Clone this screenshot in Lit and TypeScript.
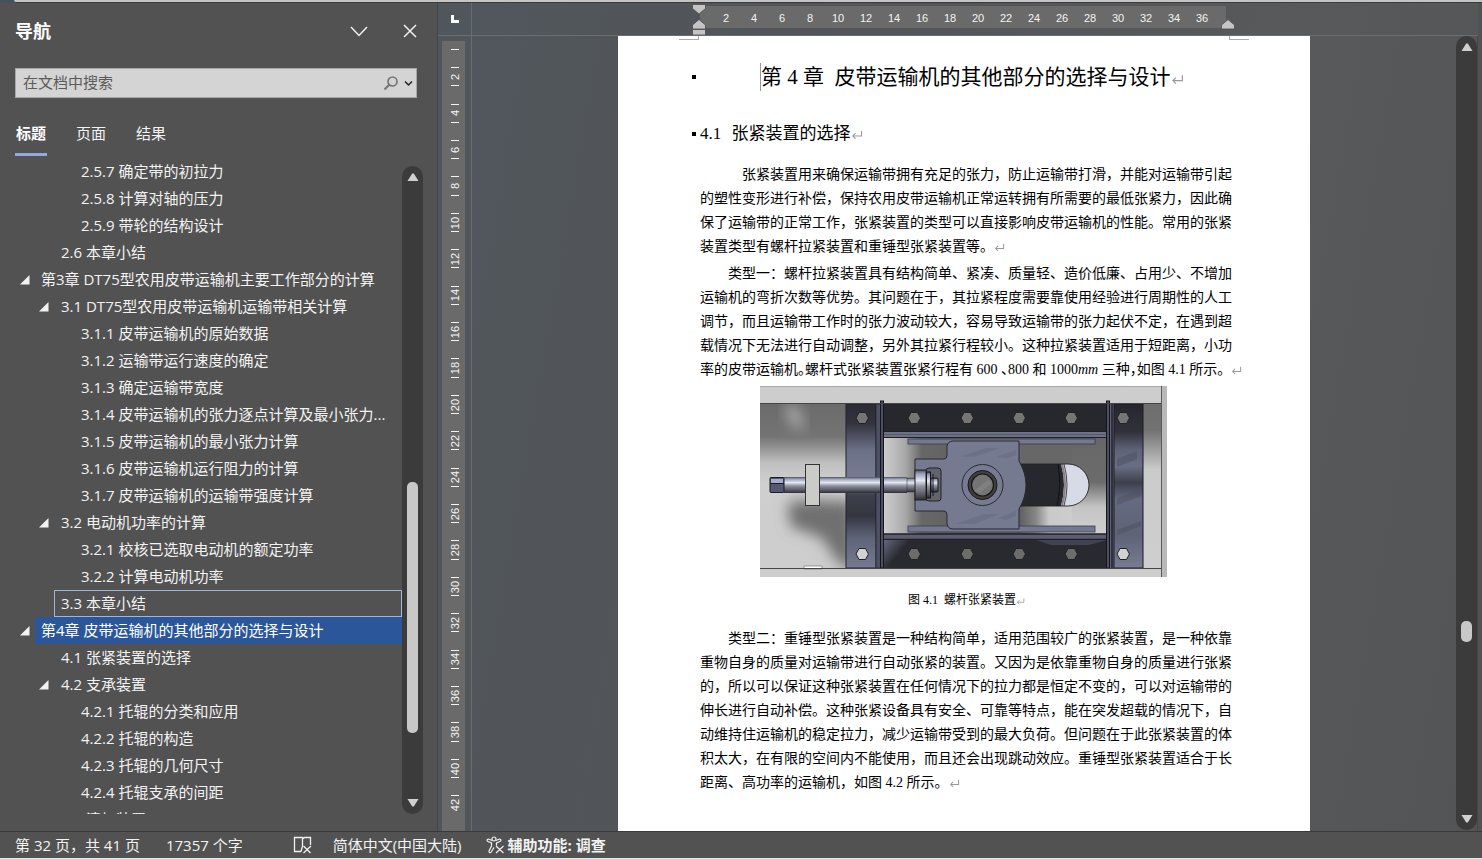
import { LitElement, html, svg, css, nothing } from "lit";
import { customElement } from "lit/decorators.js";
import { classMap } from "lit/directives/class-map.js";

interface Heading {
  level: 1 | 2 | 3;
  text: string;
  open?: boolean;
  focused?: boolean;
  current?: boolean;
}

const HEADINGS: Heading[] = [
  { level: 3, text: "2.5.7 确定带的初拉力" },
  { level: 3, text: "2.5.8 计算对轴的压力" },
  { level: 3, text: "2.5.9 带轮的结构设计" },
  { level: 2, text: "2.6 本章小结" },
  { level: 1, text: "第3章 DT75型农用皮带运输机主要工作部分的计算", open: true },
  { level: 2, text: "3.1 DT75型农用皮带运输机运输带相关计算", open: true },
  { level: 3, text: "3.1.1 皮带运输机的原始数据" },
  { level: 3, text: "3.1.2 运输带运行速度的确定" },
  { level: 3, text: "3.1.3 确定运输带宽度" },
  { level: 3, text: "3.1.4 皮带运输机的张力逐点计算及最小张力..." },
  { level: 3, text: "3.1.5 皮带运输机的最小张力计算" },
  { level: 3, text: "3.1.6 皮带运输机运行阻力的计算" },
  { level: 3, text: "3.1.7 皮带运输机的运输带强度计算" },
  { level: 2, text: "3.2 电动机功率的计算", open: true },
  { level: 3, text: "3.2.1 校核已选取电动机的额定功率" },
  { level: 3, text: "3.2.2 计算电动机功率" },
  { level: 2, text: "3.3 本章小结", focused: true },
  { level: 1, text: "第4章 皮带运输机的其他部分的选择与设计", open: true, current: true },
  { level: 2, text: "4.1 张紧装置的选择" },
  { level: 2, text: "4.2 支承装置", open: true },
  { level: 3, text: "4.2.1 托辊的分类和应用" },
  { level: 3, text: "4.2.2 托辊的构造" },
  { level: 3, text: "4.2.3 托辊的几何尺寸" },
  { level: 3, text: "4.2.4 托辊支承的间距" },
  { level: 2, text: "4.3 清扫装置" },
];

const PARA_1 = [
  "张紧装置用来确保运输带拥有充足的张力，防止运输带打滑，并能对运输带引起",
  "的塑性变形进行补偿，保持农用皮带运输机正常运转拥有所需要的最低张紧力，因此确",
  "保了运输带的正常工作，张紧装置的类型可以直接影响皮带运输机的性能。常用的张紧",
  "装置类型有螺杆拉紧装置和重锤型张紧装置等。",
];
const PARA_2 = [
  "类型一：螺杆拉紧装置具有结构简单、紧凑、质量轻、造价低廉、占用少、不增加",
  "运输机的弯折次数等优势。其问题在于，其拉紧程度需要靠使用经验进行周期性的人工",
  "调节，而且运输带工作时的张力波动较大，容易导致运输带的张力起伏不定，在遇到超",
  "载情况下无法进行自动调整，另外其拉紧行程较小。这种拉紧装置适用于短距离，小功",
];
const PARA_3 = [
  "类型二：重锤型张紧装置是一种结构简单，适用范围较广的张紧装置，是一种依靠",
  "重物自身的质量对运输带进行自动张紧的装置。又因为是依靠重物自身的质量进行张紧",
  "的，所以可以保证这种张紧装置在任何情况下的拉力都是恒定不变的，可以对运输带的",
  "伸长进行自动补偿。这种张紧设备具有安全、可靠等特点，能在突发超载的情况下，自",
  "动维持住运输机的稳定拉力，减少运输带受到的最大负荷。但问题在于此张紧装置的体",
  "积太大，在有限的空间内不能使用，而且还会出现跳动效应。重锤型张紧装置适合于长",
  "距离、高功率的运输机，如图 4.2 所示。",
];

const returnMark = (size: number) => html`<svg class="mark" width=${size} height=${size} viewBox="0 0 12 12" aria-hidden="true">
  <path d="M10.5 2v5H2M4.5 4.2 1.8 7l2.7 2.8" fill="none" stroke="#9a9a9a" stroke-width="1.1" />
</svg>`;

/* Assembly drawing of the screw take-up unit */
const BOLTS = [102, 154, 207, 259, 311, 363];
const bolt = (x: number, y: number, fill: string) =>
  svg`<path d="M${x - 6} ${y}l3-5.500h6.500l3 5.500-3 5.500h-6.500z" fill=${fill} stroke="#222" stroke-width="1"/>`;

@customElement("takeup-figure")
export class TakeupFigure extends LitElement {
  static styles = css`
    :host { display: block; }
    svg { display: block; }
  `;
  render() {
    return html`<svg width="407" height="191" viewBox="0 0 407 191" role="img" aria-label="螺杆张紧装置">
      <defs>
        <linearGradient id="shaft" x1="0" y1="0" x2="0" y2="1">
          <stop offset="0" stop-color="#4a4c5c" /><stop offset=".12" stop-color="#9a9eb6" />
          <stop offset=".35" stop-color="#e4e8f2" /><stop offset=".55" stop-color="#8f939f" />
          <stop offset=".85" stop-color="#50525c" /><stop offset="1" stop-color="#2c2d34" />
        </linearGradient>
        <linearGradient id="leftcol" x1="0" y1="0" x2="0" y2="1">
          <stop offset="0" stop-color="#2a2b33" /><stop offset=".12" stop-color="#33343e" />
          <stop offset=".28" stop-color="#6c7086" /><stop offset=".46" stop-color="#787c92" />
          <stop offset=".56" stop-color="#3d3f4a" /><stop offset=".68" stop-color="#33353f" />
          <stop offset=".82" stop-color="#60647a" /><stop offset="1" stop-color="#767a90" />
        </linearGradient>
        <linearGradient id="rightcol" x1="0" y1="0" x2="0" y2="1">
          <stop offset="0" stop-color="#26272d" /><stop offset=".17" stop-color="#30313b" />
          <stop offset=".28" stop-color="#5f6378" /><stop offset=".38" stop-color="#6a6e84" />
          <stop offset=".48" stop-color="#3d3f4b" /><stop offset=".58" stop-color="#666a80" />
          <stop offset=".8" stop-color="#5f6378" /><stop offset="1" stop-color="#787c92" />
        </linearGradient>
        <linearGradient id="leftbg" x1="0" y1="0" x2="0" y2="1">
          <stop offset="0" stop-color="#6b6b6b" /><stop offset=".2" stop-color="#747474" />
          <stop offset=".36" stop-color="#c0c0c0" /><stop offset=".48" stop-color="#cfcfcf" />
          <stop offset="1" stop-color="#cdcdcd" />
        </linearGradient>
        <linearGradient id="rightbg" x1="0" y1="0" x2="0" y2="1">
          <stop offset="0" stop-color="#6e6e6e" /><stop offset=".16" stop-color="#727272" />
          <stop offset=".4" stop-color="#cbcbcb" /><stop offset="1" stop-color="#cecece" />
        </linearGradient>
        <linearGradient id="innerleft" x1="0" y1="0" x2="1" y2="0">
          <stop offset="0" stop-color="#cfcfcf" /><stop offset=".35" stop-color="#a8a8a8" />
          <stop offset=".6" stop-color="#686868" /><stop offset="1" stop-color="#636363" />
        </linearGradient>
        <linearGradient id="lowstrip" x1="0" y1="0" x2="1" y2="0">
          <stop offset="0" stop-color="#5c5c5c" /><stop offset=".2" stop-color="#868686" />
          <stop offset=".35" stop-color="#cacaca" /><stop offset="1" stop-color="#d0d0d0" />
        </linearGradient>
        <linearGradient id="lowband" x1="0" y1="0" x2="1" y2=".1">
          <stop offset="0" stop-color="#666a7e" /><stop offset=".12" stop-color="#292a30" />
          <stop offset="1" stop-color="#292a30" />
        </linearGradient>
        <linearGradient id="tail" x1="0" y1="0" x2="0" y2="1">
          <stop offset="0" stop-color="#686868" /><stop offset=".42" stop-color="#6b6b6b" />
          <stop offset=".7" stop-color="#c4c4c4" /><stop offset="1" stop-color="#cfcfcf" />
        </linearGradient>
        <filter id="soft" x="-30%" y="-30%" width="160%" height="160%"><feGaussianBlur stdDeviation="7" /></filter>
        <clipPath id="leftclip"><rect x="0" y="18" width="86" height="164" /></clipPath>
        <clipPath id="slot"><path d="M255 78h53a21 21 0 0 1 0 42h-53z" /></clipPath>
      </defs>
      <rect width="407" height="191" fill="#cdcdcd" />
      <path d="M0 .5h407" stroke="#a8a8a8" />
      <rect x="0" y="18" width="86" height="164" fill="url(#leftbg)" />
      <g clip-path="url(#leftclip)">
        <path d="M24 22l12-4 8 22-8 4z" fill="#b0b0b0" filter="url(#soft)" />
        <path d="M28 116l30-2 36 2v70l-16-10-16-24-32-12z" fill="#707070" filter="url(#soft)" />
      </g>
      <path d="M44 180h18v3H44z" fill="#fff" stroke="#777" stroke-width=".7" />
      <rect x="382" y="18" width="19" height="164" fill="url(#rightbg)" />
      <rect x="402" y="0" width="5" height="191" fill="#b9b9b9" />
      <rect x="86" y="18" width="30" height="164" fill="url(#leftcol)" stroke="#22232b" />
      <rect x="116" y="18" width="5" height="164" fill="#4d4f63" stroke="#22232b" stroke-width=".7" />
      <rect x="123" y="18" width="224" height="27" fill="#27282d" />
      <rect x="123" y="52" width="224" height="96" fill="#676767" />
      <rect x="123" y="52" width="64" height="96" fill="url(#innerleft)" />
      <rect x="258" y="120" width="89" height="28" fill="url(#lowstrip)" />
      <rect x="312" y="58" width="35" height="90" fill="url(#tail)" />
      <rect x="123" y="45" width="224" height="7" fill="#6d7187" />
      <path d="M123 45.500h224M123 51.500h224" stroke="#1f2027" />
      <path d="M123 48.500h224" stroke="#555a6c" />
      <rect x="148" y="53" width="187" height="5" fill="#747890" stroke="#3a3c4a" stroke-width=".8" />
      <rect x="148" y="140" width="187" height="6" fill="#747890" stroke="#3a3c4a" stroke-width=".8" />
      <rect x="123" y="148" width="224" height="6" fill="#5c5d70" />
      <path d="M123 148h224M123 153.500h224" stroke="#1f2027" stroke-width="1.3" />
      <rect x="123" y="154" width="224" height="28" fill="url(#lowband)" />
      <path d="M276 154h71l-18 5h-38z" fill="#525566" opacity=".6" />
      <g clip-path="url(#slot)">
        <rect x="255" y="78" width="75" height="42" fill="#d7dbe7" />
        <path d="M255 78h46q6 21 0 42h-46z" fill="#27282d" />
        <path d="M298 78q4 21-1 42" fill="none" stroke="#111" />
        <path d="M302 78q6 21 0 42" fill="none" stroke="#8a8188" stroke-width="2" />
        <path d="M304 78q6 21 0 42" fill="none" stroke="#222" stroke-width=".8" />
      </g>
      <path d="M255 78h53a21 21 0 0 1 0 42h-53" fill="none" stroke="#222" stroke-width=".9" />
      <path d="M155 73h29q3 0 3-4v-9q1-5 6-5h66v20q7 12 7 24t-7 24v20h-66q-5 0-6-5v-9q0-4-3-4h-29z" fill="#767a90" stroke="#292a33" />
      <path d="M200 71l26-9h14l-26 9zM236 71l20-7v5l-8 3zM196 138l28-10h16l-26 10zM238 132l18-7v5l-10 4z" fill="#666a80" opacity=".6" />
      <circle cx="222.5" cy="99" r="20.5" fill="#777b91" stroke="#292a33" />
      <circle cx="222.5" cy="99" r="14.5" fill="#3f403f" stroke="#191919" />
      <circle cx="222.5" cy="99" r="11" fill="#757575" stroke="#151515" stroke-width="1.2" />
      <path d="M214 105l14-11 4 3-12 10z" fill="#808080" />
      <rect x="166" y="82" width="15" height="33" rx="3" fill="#62646c" stroke="#20212a" />
      <rect x="24" y="91" width="123" height="16" fill="url(#shaft)" />
      <rect x="147" y="92" width="9" height="14" fill="url(#shaft)" stroke="#333" stroke-width=".5" />
      <rect x="10" y="91.5" width="14" height="15" rx="1" fill="#555870" stroke="#191a24" />
      <path d="M11 93h12v4H11z" fill="#a7acca" />
      <path d="M10 97.500h14" stroke="#191a24" />
      <rect x="45.5" y="78.5" width="14" height="41" fill="#cbcbc8" stroke="#333" />
      <rect x="155" y="84" width="11" height="30" fill="url(#shaft)" stroke="#222" />
      <rect x="166.5" y="86" width="4" height="26" fill="url(#shaft)" stroke="#15161c" />
      <rect x="171" y="92" width="7" height="14" rx="1" fill="url(#shaft)" stroke="#15161c" />
      <path d="M173 88v22" stroke="#15161c" stroke-width="1" />
      <rect x="120.5" y="15" width="3" height="167" fill="#4c4e62" stroke="#15161c" />
      <rect x="347" y="18" width="7" height="164" fill="#5d6076" />
      <path d="M352 18v164" stroke="#22232b" stroke-width="1.5" />
      <rect x="346.5" y="15" width="3" height="167" fill="#4c4e62" stroke="#15161c" />
      <rect x="354" y="18" width="29" height="164" fill="url(#rightcol)" stroke="#1c1d25" />
      <path d="M357 73l20-8v8l-20 8zM357 112l24-9v7l-24 9zM357 144l24-9v5l-24 9z" fill="#4c4f5e" opacity=".5" />
      <path d="M0 17.500h401M0 182.500h401" stroke="#444" />
      <path d="M401.500 0v191" stroke="#5a5a5a" />
      ${BOLTS.map((x) => bolt(x, 32, "#757575"))}
      ${BOLTS.map((x, i) => bolt(x, 168, i === 0 || i === 5 ? "#d2d2d2" : "#6c6c6c"))}
    </svg>`;
  }
}

@customElement("scroll-track")
export class ScrollTrack extends LitElement {
  static properties = {
    before: { type: Number },
    size: { type: Number },
    after: { type: Number },
  };
  declare before: number;
  declare size: number;
  declare after: number;

  static styles = css`
    :host {
      display: flex;
      flex-direction: column;
      align-items: center;
      width: 21px;
      box-sizing: border-box;
      border-radius: 11px;
      background: #3b3b3b;
    }
    button {
      display: grid;
      place-items: center;
      width: 21px;
      height: 22px;
      padding: 0;
      border: 0;
      background: none;
    }
    .thumb {
      width: 11px;
      border-radius: 5px;
      background: #c8c8c8;
    }
  `;
  render() {
    return html`
      <button aria-label="向上滚动"><svg width="12" height="10" viewBox="0 0 12 10"><path d="M5.200 1.500h1.600L11.500 9H.5z" fill="#d0d0d0" /></svg></button>
      <div style="flex:${this.before} 1 0"></div>
      <div class="thumb" style="flex:${this.size} 1 0"></div>
      <div style="flex:${this.after} 1 0"></div>
      <button aria-label="向下滚动"><svg width="12" height="10" viewBox="0 0 12 10"><path d="M5.200 8.500h1.600L11.500 1H.5z" fill="#d0d0d0" /></svg></button>
    `;
  }
}

@customElement("nav-pane")
export class NavPane extends LitElement {
  static styles = css`
    :host {
      display: flex;
      flex-direction: column;
      box-sizing: border-box;
      width: 438px;
      min-height: 0;
      padding: 11px 14px 17px 0;
      border-right: 1px solid #42464a;
      background: #525252;
      color: #f2f2f2;
      font: 15px/27px "Open Sans", "Noto Sans CJK SC", sans-serif;
    }
    button { padding: 0; border: 0; background: none; color: inherit; font: inherit; }
    svg { display: block; }
    .head { display: flex; align-items: center; gap: 32px; height: 34px; padding: 0 4px 0 15px; }
    h2 { flex: 1; margin: 0; font-size: 18px; line-height: 34px; font-weight: 700; color: #fff; }
    .search {
      display: flex;
      align-items: center;
      box-sizing: border-box;
      height: 30px;
      margin: 20px 6px 0 15px;
      padding-right: 3px;
      gap: 5px;
      border: 1px solid #a6a6a6;
      background: #d4d4d4;
    }
    .search input {
      flex: 1;
      min-width: 0;
      height: 24px;
      padding: 0 7px 2px;
      border: 0;
      outline: 0;
      background: none;
      color: #444;
      font: inherit;
      line-height: 22px;
    }
    .search input::placeholder { color: #5a5a5a; opacity: 1; }
    .tabs { display: flex; gap: 28px; margin: 22px 0 0 15px; }
    .tabs button { width: 32px; height: 36px; line-height: 26px; padding-bottom: 7px; border-bottom: 3px solid transparent; white-space: nowrap; }
    .tabs .on { font-weight: 700; color: #fff; border-color: #8faadc; }
    .body { display: flex; flex: 1; min-height: 0; margin-top: 2px; }
    ul { flex: 1; min-width: 0; margin: 0; padding: 0; list-style: none; overflow: hidden; }
    li { display: flex; height: 27px; align-items: stretch; }
    .twist { display: grid; place-items: center; width: 20px; }
    .l1 { padding-left: 15px; }
    .l2 { padding-left: 34px; }
    .l3 { padding-left: 54px; }
    a {
      flex: 1;
      min-width: 0;
      box-sizing: border-box;
      padding-left: 5px;
      border: 1px solid transparent;
      color: inherit;
      line-height: 25px;
      text-decoration: none;
      white-space: nowrap;
      overflow: hidden;
    }
    .l2 a, .l3 a { padding-left: 6px; }
    .current a { background: #2b579a; color: #fff; }
    .focused a { border-color: #9fb6dd; }
    scroll-track { margin-top: 8px; }
  `;
  render() {
    return html`
      <div class="head">
        <h2>导航</h2>
        <button aria-label="任务窗格选项"><svg width="20" height="20" viewBox="0 0 20 20"><path d="M2 6l8 8.500L18 6" fill="none" stroke="#f0f0f0" stroke-width="1.500" /></svg></button>
        <button aria-label="关闭"><svg width="18" height="18" viewBox="0 0 18 18"><path d="M3 3l12 12M15 3L3 15" fill="none" stroke="#f0f0f0" stroke-width="1.500" /></svg></button>
      </div>
      <div class="search">
        <input type="text" aria-label="在文档中搜索" placeholder="在文档中搜索" />
        <button aria-label="搜索"><svg width="16" height="16" viewBox="0 0 16 16"><circle cx="9.5" cy="6.5" r="4.5" fill="none" stroke="#777" stroke-width="1.700" /><path d="M6.200 9.800L1.500 14.500" stroke="#777" stroke-width="2.200" /></svg></button>
        <button aria-label="搜索选项"><svg width="9" height="10" viewBox="0 0 9 10"><path d="M1 3.500l3.500 3.500L8 3.500" fill="none" stroke="#222" stroke-width="1.500" /></svg></button>
      </div>
      <div class="tabs" role="tablist">
        <button role="tab" aria-selected="true" class="on">标题</button>
        <button role="tab" aria-selected="false">页面</button>
        <button role="tab" aria-selected="false">结果</button>
      </div>
      <div class="body">
        <ul>
          ${HEADINGS.map(
            (h) => html`<li class=${classMap({ ["l" + h.level]: true, current: !!h.current, focused: !!h.focused })}>
              ${h.open
                ? html`<button class="twist" aria-label="折叠"><svg width="10" height="10" viewBox="0 0 10 10"><path d="M9.500 0v9.500H0z" fill="#f2f2f2" /></svg></button>`
                : html`<span class="twist">${nothing}</span>`}
              <a href="#">${h.text}</a>
            </li>`
          )}
        </ul>
        <scroll-track .before=${294} .size=${251} .after=${59}></scroll-track>
      </div>
    `;
  }
}

@customElement("doc-view")
export class DocView extends LitElement {
  static styles = css`
    :host {
      display: grid;
      grid-template: 33px minmax(0, 1fr) / 34px minmax(0, 1fr) 22px;
      min-width: 0;
      min-height: 0;
      background: linear-gradient(100deg, #50575c 0%, #525459 30%, #58595a 75%, #535456 100%);
    }
    svg { display: block; }
    .corner { display: grid; place-items: center; border: solid #6a6d70; border-width: 0 1px 1px 0; }
    .hruler { grid-column: 2 / 4; display: flex; justify-content: center; padding-right: 22px; border-bottom: 1px solid #6a6d70; }
    .vruler { border-right: 1px solid #6a6d70; overflow: hidden; padding: 5px 0 0 4px; }
    .strip { height: 100%; width: 23px; overflow: hidden; background: #6a6a6a; }
    .num { fill: #f4f4f4; font: 11px "Liberation Sans", sans-serif; text-anchor: middle; }
    .canvas { display: flex; justify-content: center; min-height: 0; overflow: hidden; }
    .page {
      box-sizing: border-box;
      width: 692px;
      background: #fff;
      color: #000;
      font-family: "Liberation Serif", "Noto Sans CJK SC", serif;
    }
    .crops { display: flex; justify-content: space-between; padding: 0 61px; }
    .crops i { box-sizing: border-box; width: 20px; height: 4px; border: solid #aaa; border-width: 0 1px 1px 0; }
    .crops i:last-child { border-width: 0 0 1px 1px; }
    h1, h2 { display: flex; align-items: center; margin: 0; padding-left: 74px; font-weight: 400; white-space: pre; }
    h1::before, h2::before { content: ""; width: 4px; height: 4px; background: #000; }
    h1 { gap: 64px; margin-top: 23px; font-size: 21px; line-height: 28px; }
    h1 span { border-left: 1px solid #999; }
    h2 { gap: 4px; margin-top: 31px; font-size: 17px; line-height: 24px; }
    h2 b { font-weight: 400; margin-right: 6px; }
    .mark { display: inline-block; vertical-align: middle; }
    .text { padding: 0 78px 0 82px; font-size: 14px; line-height: 24px; }
    p { margin: 0; }
    p + p { padding-top: 3px; }
    .first { margin-top: 17px; }
    .line { display: block; white-space: pre; }
    .in2 { padding-left: 28px; }
    .in3 { padding-left: 42px; }
    .half { font-feature-settings: "halt"; }
    figure { margin: 4px 0 17px 142px; }
    figcaption { padding: 13px 0 0 148px; font-size: 12px; line-height: 20px; white-space: pre; }
    scroll-track { margin-bottom: 1px; }
    .rail { display: grid; border-right: 1px solid #464646; }
  `;

  private lines(lines: string[], indent: string) {
    return lines.map((t, i) => html`<span class="line ${i === 0 ? indent : ""}">${t}</span>`);
  }

  private horizontalRuler() {
    return html`<svg width="692" height="32" viewBox="0 0 692 32" aria-hidden="true">
      <rect x="82" y="3" width="526" height="22" fill="#6a6a6a" />
      ${Array.from({ length: 18 }, (_, i) => svg`<text class="num" x=${108 + i * 28} y="19">${(i + 1) * 2}</text>`)}
      <g fill="#c4c4c4" stroke="#4a4a4a" stroke-width=".8">
        <path d="M74.500 1.500h13v4l-6.500 5.500-6.500-5.500z" />
        <path d="M74.500 26v-4l6.500-5.500 6.500 5.500v4z" />
        <path d="M74.500 26.500h13V32h-13z" />
        <path d="M603.500 26v-4l6.500-5.500 6.500 5.500v4z" />
      </g>
    </svg>`;
  }

  private verticalRuler() {
    const ticks = Array.from({ length: 42 }, (_, i) => Math.round(8 + i * 18.2));
    return html`<svg width="23" height="790" viewBox="0 0 23 790" aria-hidden="true">
      ${ticks.map((y) => svg`<path d="M9 ${y + 0.5}h8" stroke="#f4f4f4" />`)}
      ${Array.from({ length: 21 }, (_, i) => {
        const y = Math.round(36 + i * 36.4);
        return svg`<text class="num" x="17" y=${y} transform="rotate(-90 17 ${y})">${(i + 1) * 2}</text>`;
      })}
    </svg>`;
  }

  render() {
    return html`
      <div class="corner"><svg width="10" height="10" viewBox="0 0 10 10"><path d="M2.500 1v6.500H9" fill="none" stroke="#fff" stroke-width="3" /></svg></div>
      <div class="hruler">${this.horizontalRuler()}</div>
      <div class="vruler"><div class="strip">${this.verticalRuler()}</div></div>
      <div class="canvas">
        <article class="page">
          <div class="crops"><i></i><i></i></div>
          <h1><span>第 4 章  皮带运输机的其他部分的选择与设计${returnMark(13)}</span></h1>
          <h2><span><b>4.1 </b>张紧装置的选择${returnMark(12)}</span></h2>
          <div class="text first">
            <p>
              ${this.lines(PARA_1.slice(0, 3), "in3")}
              <span class="line">${PARA_1[3]}${returnMark(11)}</span>
            </p>
            <p>
              ${this.lines(PARA_2, "in2")}
              <span class="line">率的皮带运输机<span class="half">。</span>螺杆式张紧装置张紧行程有 600 <span class="half">、</span>800 和 1000<em>mm</em> 三种<span class="half">，</span>如图 4.1 所示。${returnMark(11)}</span>
            </p>
          </div>
          <figure>
            <takeup-figure></takeup-figure>
            <figcaption>图 4.1  螺杆张紧装置${returnMark(9)}</figcaption>
          </figure>
          <div class="text">
            <p>
              ${this.lines(PARA_3.slice(0, 6), "in2")}
              <span class="line">${PARA_3[6]}${returnMark(11)}</span>
            </p>
          </div>
        </article>
      </div>
      <div class="rail"><scroll-track .before=${564} .size=${21} .after=${166}></scroll-track></div>
    `;
  }
}

@customElement("status-bar")
export class StatusBar extends LitElement {
  static styles = css`
    :host {
      display: flex;
      align-items: center;
      box-sizing: border-box;
      height: 28px;
      padding-left: 15px;
      border-top: 1px solid #3a3a3a;
      border-bottom: 1px solid #e8e8e8;
      background: #525252;
      color: #f2f2f2;
      font: 15px/26px "Open Sans", "Noto Sans CJK SC", sans-serif;
    }
    button { display: flex; align-items: center; gap: 3px; padding: 0; border: 0; background: none; color: inherit; font: inherit; white-space: nowrap; }
    .words { margin-left: 26px; }
    .proof { margin-left: 50px; }
    .lang { margin-left: 21px; }
    .access { margin-left: 24px; font-weight: 700; }
  `;
  render() {
    return html`
      <button>第 32 页，共 41 页</button>
      <button class="words">17357 个字</button>
      <button class="proof" aria-label="校对">
        <svg width="19" height="18" viewBox="0 0 19 18" fill="none" stroke="#f0f0f0" stroke-width="1.300"><path d="M9.500 3V1.500h-8v14H8M9.500 3v7M9.500 3l2-1.500h6V9M9.500 10L8 15.500M10.500 10l7 7M18 10l-7.500 7" /></svg>
      </button>
      <button class="lang">简体中文(中国大陆)</button>
      <button class="access">
        <svg width="19" height="18" viewBox="0 0 19 18" fill="none" stroke="#f0f0f0" stroke-width="1.200"><circle cx="8" cy="3" r="2" /><path d="M6 4.500L2.500 3C.5 3 .8 5 2 5.500L5.500 7v3l-2.500 5c-.5 2 1.500 2.200 2.200 1L8 11.500M10 4.500L13.500 3c2 0 1.700 2 .5 2.500L10.500 7v2.500M10 10l7.500 7M17.500 10L10 17" /></svg>
        <span>辅助功能: 调查</span>
      </button>
    `;
  }
}

@customElement("app-root")
export class AppRoot extends LitElement {
  static styles = css`
    :host { display: flex; flex-direction: column; height: 100vh; overflow: hidden; background: #525252; }
    .top { height: 3px; box-sizing: border-box; padding-left: 14px; background: #44525c; }
    .ribbon { height: 2px; background: #c4c4c4; border-bottom: 1px solid #3c3c3c; border-radius: 0 0 0 3px; }
    .main { display: grid; grid-template: minmax(0, 1fr) / auto minmax(0, 1fr); flex: 1; min-height: 0; padding-right: 4px; }
  `;
  render() {
    return html`
      <div class="top"><div class="ribbon"></div></div>
      <div class="main">
        <nav-pane></nav-pane>
        <doc-view></doc-view>
      </div>
      <status-bar></status-bar>
    `;
  }
}
